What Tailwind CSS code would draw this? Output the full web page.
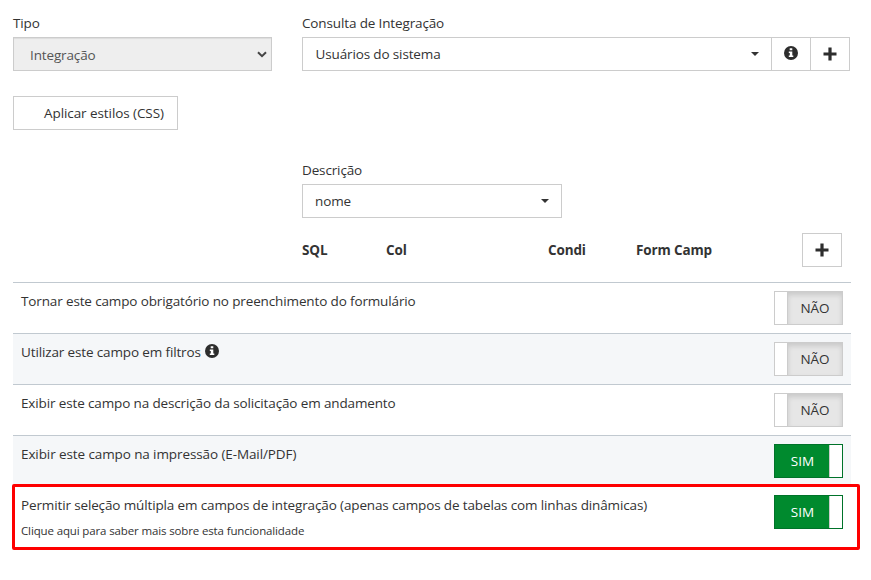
<!DOCTYPE html>
<html lang="pt-BR">
<head>
<meta charset="utf-8">
<title>Campo</title>
<script src="https://cdn.jsdelivr.net/npm/@tailwindcss/browser@4"></script>
</head>
<body class="relative h-[580px] w-[871px] overflow-hidden bg-white pl-[13px] font-['Open_Sans','Noto_Sans',sans-serif] text-[13.5px] leading-5 tracking-[-0.135px] whitespace-nowrap text-[#333]">
<svg class="hidden">
  <symbol id="info" viewBox="0 0 14 14"><circle cx="7" cy="7" r="7" fill="#2d2d2d"/><path d="M5.7 2.3h2.6v2H5.7zM4.8 5.5h3.5v4h1v1.6H4.8V9.5h1V7.1h-1z" fill="#fff"/></symbol>
  <symbol id="plus" viewBox="0 0 14 14"><path d="M5.4.5h3.2v4.9h4.9v3.2H8.6v4.9H5.4V8.6H.5V5.4h4.9z" fill="#2d2d2d"/></symbol>
</svg>
<div class="flex gap-[30px] pt-[13px]">
  <div class="w-[259px]">
    <div class="h-6"><span>Tipo</span></div>
    <div class="flex h-[34px] items-center justify-between border border-[#ccc] bg-[#eee] pt-[2px] pr-[4px] pl-4 text-[#555] shadow-[inset_0_1px_1px_rgba(0,0,0,0.075)]">
      <span>Integração</span>
      <svg class="mb-[2px] h-[7px] w-[10px]" viewBox="0 0 10 7"><path d="M1 1.2 5 5.2 9 1.2" fill="none" stroke="#444" stroke-width="2"/></svg>
    </div>
    <div class="mt-[25px] flex h-[34px] w-[165px] items-center border border-[#ccc] pl-[30px] tracking-[-0.08px]"><span>Aplicar estilos (CSS)</span></div>
  </div>
  <div class="w-[548px]">
    <div class="h-6"><span>Consulta de Integração</span></div>
    <div class="flex h-[34px] border border-[#ccc]">
      <div class="flex flex-1 items-center justify-between pr-3 pl-[12.5px]"><span>Usuários do sistema</span><svg class="h-1 w-2" viewBox="0 0 8 4"><path d="M0 0h8L4 4z" fill="#333"/></svg></div>
      <div class="flex w-[39px] justify-center border-l border-[#ccc] pt-2"><svg class="h-[14px] w-[14px]"><use href="#info"/></svg></div>
      <div class="flex w-[39px] justify-center border-l border-[#ccc] pt-[9px]"><svg class="h-[14px] w-[14px]"><use href="#plus"/></svg></div>
    </div>
    <div class="mt-[89px] h-6"><span>Descrição</span></div>
    <div class="flex h-[34px] w-[260px] items-center justify-between border border-[#ccc] px-3"><span>nome</span><svg class="h-1 w-2" viewBox="0 0 8 4"><path d="M0 0h8L4 4z" fill="#333"/></svg></div>
    <div class="mt-[15px] flex h-[34px] items-center font-bold">
      <div class="w-[84px]"><span>SQL</span></div>
      <div class="w-[162px]"><span>Col</span></div>
      <div class="w-[88px]"><span>Condi</span></div>
      <div class="w-[166px]"><span>Form Camp</span></div>
      <div class="flex h-[34px] w-10 justify-center border border-[#ccc] pt-[9px]"><svg class="h-[14px] w-[14px]"><use href="#plus"/></svg></div>
    </div>
  </div>
</div>
<div class="mt-[15px] w-[838px]">
  <div class="flex h-[51px] justify-between border-t border-[#c1c9d0] px-2 pt-2">
    <span>Tornar este campo obrigatório no preenchimento do formulário</span>
    <div class="flex h-[34px] w-[69px] border border-[#ccc] bg-white"><div class="w-3"></div><div class="flex flex-1 items-center justify-center border-l border-[#ccc] bg-[#e6e6e6] shadow-[inset_0_3px_5px_rgba(0,0,0,0.125)]"><span>NÃO</span></div></div>
  </div>
  <div class="flex h-[51px] justify-between border-t border-[#c1c9d0] bg-[#f5f7f9] px-2 pt-2">
    <div class="flex gap-[4px]"><span>Utilizar este campo em filtros</span><svg class="mt-[2px] h-[14px] w-[14px]"><use href="#info"/></svg></div>
    <div class="flex h-[34px] w-[69px] border border-[#ccc] bg-white"><div class="w-3"></div><div class="flex flex-1 items-center justify-center border-l border-[#ccc] bg-[#e6e6e6] shadow-[inset_0_3px_5px_rgba(0,0,0,0.125)]"><span>NÃO</span></div></div>
  </div>
  <div class="flex h-[51px] justify-between border-t border-[#c1c9d0] px-2 pt-2">
    <span>Exibir este campo na descrição da solicitação em andamento</span>
    <div class="flex h-[34px] w-[69px] border border-[#ccc] bg-white"><div class="w-3"></div><div class="flex flex-1 items-center justify-center border-l border-[#ccc] bg-[#e6e6e6] shadow-[inset_0_3px_5px_rgba(0,0,0,0.125)]"><span>NÃO</span></div></div>
  </div>
  <div class="flex h-[51px] justify-between border-t border-[#c1c9d0] bg-[#f5f7f9] px-2 pt-2">
    <span class="tracking-[-0.1px]">Exibir este campo na impressão (E-Mail/PDF)</span>
    <div class="flex h-[34px] w-[69px] border border-[#00732a] bg-white"><div class="flex w-[55px] items-center justify-center border-r border-[#ccc] bg-[#008a2e] pl-px tracking-[0.1px] text-white"><span>SIM</span></div></div>
  </div>
  <div class="flex h-[64px] justify-between border-t border-[#c1c9d0] px-2 pt-2">
    <div><div><span>Permitir seleção múltipla em campos de integração (apenas campos de tabelas com linhas dinâmicas)</span></div><div class="mt-[6px] text-[11.5px]"><span>Clique aqui para saber mais sobre esta funcionalidade</span></div></div>
    <div class="flex h-[34px] w-[69px] border border-[#00732a] bg-white"><div class="flex w-[55px] items-center justify-center border-r border-[#ccc] bg-[#008a2e] pl-px tracking-[0.1px] text-white"><span>SIM</span></div></div>
  </div>
</div>
<div class="absolute top-[484px] left-[12px] h-[66px] w-[848px] rounded-[2px] border-3 border-[#fe0000]"></div>
</body>
</html>
